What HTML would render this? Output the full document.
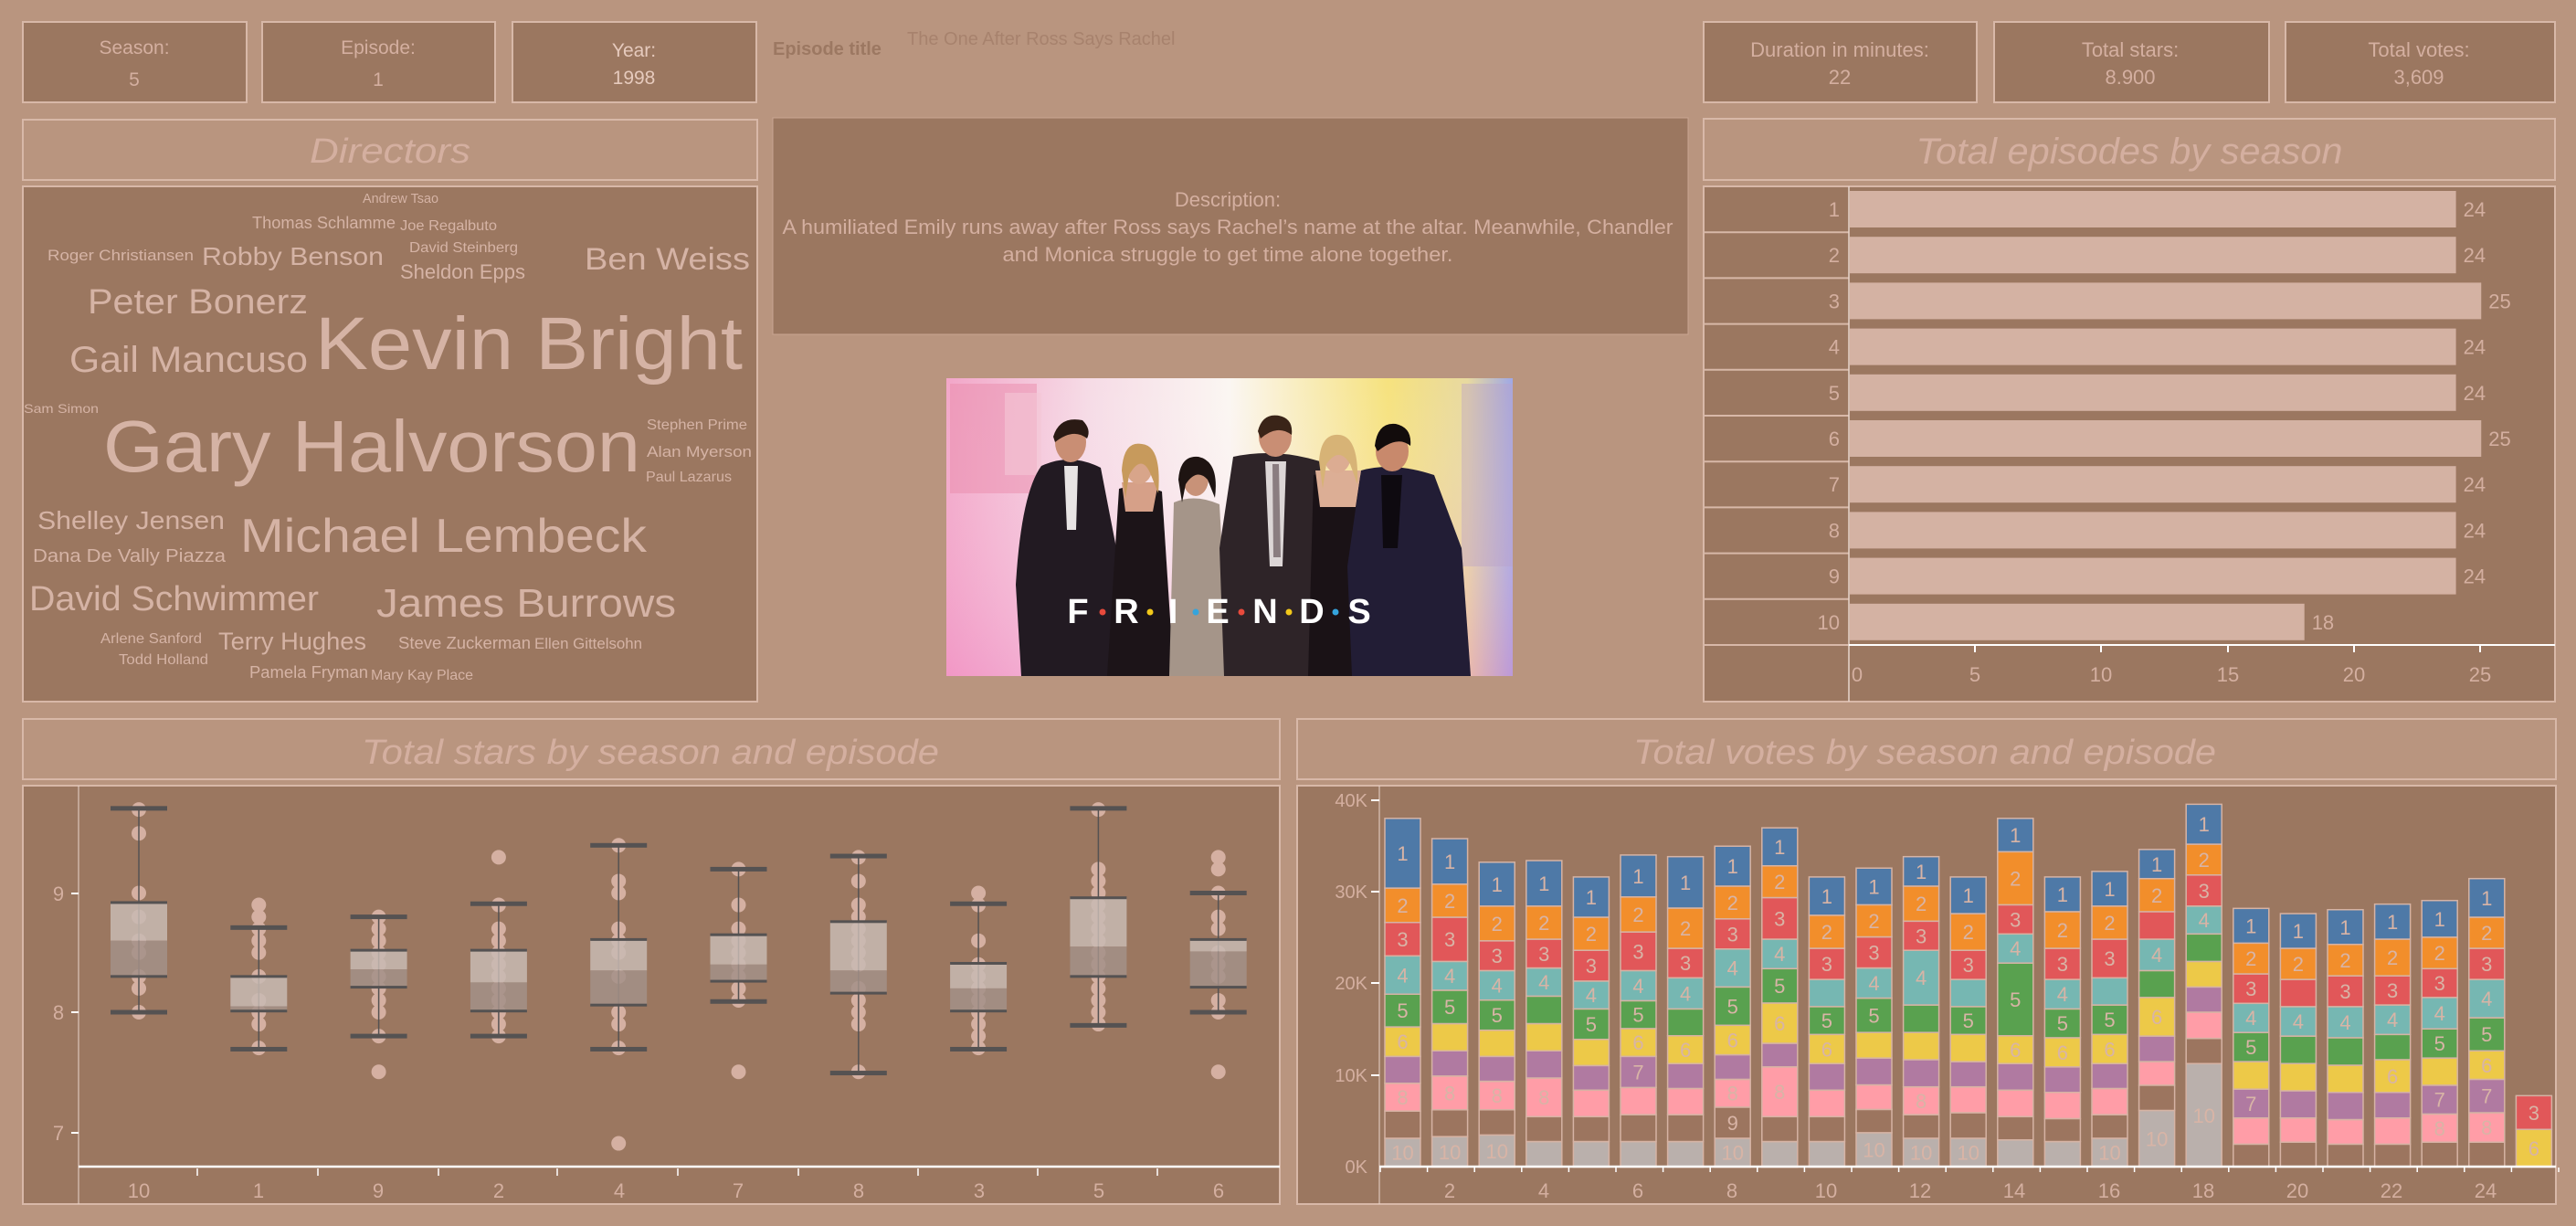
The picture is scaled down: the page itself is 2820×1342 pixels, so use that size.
<!DOCTYPE html>
<html><head><meta charset="utf-8">
<style>
html,body{margin:0;padding:0;background:#b9957f;}
svg{display:block;font-family:"Liberation Sans",sans-serif;}
</style></head>
<body>
<svg id="s" width="2820" height="1342" viewBox="0 0 2820 1342" xmlns="http://www.w3.org/2000/svg">
<defs>
<linearGradient id="bgG" x1="0" y1="0" x2="1" y2="0">
<stop offset="0" stop-color="#f2a6c8"/><stop offset="0.25" stop-color="#f6dbe6"/><stop offset="0.5" stop-color="#fbf6f2"/><stop offset="0.78" stop-color="#f6e27e"/><stop offset="0.92" stop-color="#e8d9a0"/><stop offset="1" stop-color="#9fa8e6"/>
</linearGradient>
<linearGradient id="bgV" x1="0" y1="0" x2="0" y2="1">
<stop offset="0" stop-color="#ffffff" stop-opacity="0"/><stop offset="1" stop-color="#f07cc0" stop-opacity="0.35"/>
</linearGradient>
<clipPath id="imgc"><rect x="1036" y="414" width="620" height="326"/></clipPath>
</defs>
<rect width="2820" height="1342" fill="#b9957f"/>

<g fill="#9b7760" stroke="#d8b8a8" stroke-width="2">
<rect x="25" y="24" width="245" height="88"/>
<rect x="287" y="24" width="255" height="88"/>
<rect x="561" y="24" width="267" height="88"/>
<rect x="1865" y="24" width="299" height="88"/>
<rect x="2183" y="24" width="301" height="88"/>
<rect x="2502" y="24" width="295" height="88"/>
</g>
<g font-size="21" text-anchor="middle" fill="#d4afa0">
<text x="147" y="59">Season:</text><text x="147" y="94">5</text>
<text x="414" y="59">Episode:</text><text x="414" y="94">1</text>
<text x="694" y="62" fill="#e6cabd">Year:</text><text x="694" y="92" fill="#e6cabd">1998</text>
<text x="2014" y="62" font-size="22">Duration in minutes:</text><text x="2014" y="92" font-size="22">22</text>
<text x="2332" y="62" font-size="22">Total stars:</text><text x="2332" y="92" font-size="22">8.900</text>
<text x="2648" y="62" font-size="22">Total votes:</text><text x="2648" y="92" font-size="22">3,609</text>
</g>
<text x="846" y="60" font-size="20" font-weight="bold" fill="#9c7862">Episode title</text>
<text x="993" y="49" font-size="20" fill="#a7826d">The One After Ross Says Rachel</text>

<rect x="25" y="131" width="804" height="66" fill="#b9957f" stroke="#d8b8a8" stroke-width="2"/>
<text x="427" y="178" font-size="38" font-style="italic" text-anchor="middle" fill="#d4afa0" textLength="176" lengthAdjust="spacingAndGlyphs">Directors</text>
<rect x="25" y="204" width="804" height="564" fill="#9b7760" stroke="#d8b8a8" stroke-width="2"/>
<g fill="#d5b3a5">
<text x="397" y="222" font-size="15" textLength="83" lengthAdjust="spacingAndGlyphs">Andrew Tsao</text>
<text x="276" y="250" font-size="18" textLength="157" lengthAdjust="spacingAndGlyphs">Thomas Schlamme</text>
<text x="438" y="252" font-size="16" textLength="106" lengthAdjust="spacingAndGlyphs">Joe Regalbuto</text>
<text x="52" y="285" font-size="17" textLength="160" lengthAdjust="spacingAndGlyphs">Roger Christiansen</text>
<text x="221" y="290" font-size="28" textLength="199" lengthAdjust="spacingAndGlyphs">Robby Benson</text>
<text x="448" y="276" font-size="16" textLength="119" lengthAdjust="spacingAndGlyphs">David Steinberg</text>
<text x="438" y="305" font-size="22" textLength="137" lengthAdjust="spacingAndGlyphs">Sheldon Epps</text>
<text x="640" y="295" font-size="34" textLength="181" lengthAdjust="spacingAndGlyphs">Ben Weiss</text>
<text x="96" y="343" font-size="38" textLength="241" lengthAdjust="spacingAndGlyphs">Peter Bonerz</text>
<text x="345" y="404" font-size="82" textLength="468" lengthAdjust="spacingAndGlyphs">Kevin Bright</text>
<text x="76" y="407" font-size="40" textLength="261" lengthAdjust="spacingAndGlyphs">Gail Mancuso</text>
<text x="26" y="452" font-size="14" textLength="82" lengthAdjust="spacingAndGlyphs">Sam Simon</text>
<text x="113" y="516" font-size="80" textLength="588" lengthAdjust="spacingAndGlyphs">Gary Halvorson</text>
<text x="708" y="470" font-size="16" textLength="110" lengthAdjust="spacingAndGlyphs">Stephen Prime</text>
<text x="708" y="500" font-size="17" textLength="115" lengthAdjust="spacingAndGlyphs">Alan Myerson</text>
<text x="707" y="527" font-size="16" textLength="94" lengthAdjust="spacingAndGlyphs">Paul Lazarus</text>
<text x="41" y="579" font-size="28" textLength="205" lengthAdjust="spacingAndGlyphs">Shelley Jensen</text>
<text x="263" y="604" font-size="52" textLength="445" lengthAdjust="spacingAndGlyphs">Michael Lembeck</text>
<text x="36" y="615" font-size="20" textLength="211" lengthAdjust="spacingAndGlyphs">Dana De Vally Piazza</text>
<text x="32" y="668" font-size="38" textLength="317" lengthAdjust="spacingAndGlyphs">David Schwimmer</text>
<text x="412" y="675" font-size="44" textLength="328" lengthAdjust="spacingAndGlyphs">James Burrows</text>
<text x="110" y="704" font-size="16" textLength="111" lengthAdjust="spacingAndGlyphs">Arlene Sanford</text>
<text x="239" y="711" font-size="27" textLength="162" lengthAdjust="spacingAndGlyphs">Terry Hughes</text>
<text x="436" y="710" font-size="18" textLength="145" lengthAdjust="spacingAndGlyphs">Steve Zuckerman</text>
<text x="585" y="710" font-size="17" textLength="118" lengthAdjust="spacingAndGlyphs">Ellen Gittelsohn</text>
<text x="130" y="727" font-size="16" textLength="98" lengthAdjust="spacingAndGlyphs">Todd Holland</text>
<text x="273" y="742" font-size="18" textLength="130" lengthAdjust="spacingAndGlyphs">Pamela Fryman</text>
<text x="406" y="744" font-size="16" textLength="112" lengthAdjust="spacingAndGlyphs">Mary Kay Place</text>
</g>

<rect x="846" y="129" width="1002" height="237" fill="#9b7760" stroke="#c9a592" stroke-width="1"/>
<g font-size="22" fill="#d4afa0" text-anchor="middle">
<text x="1344" y="226">Description:</text>
<text x="1344" y="256" textLength="975" lengthAdjust="spacingAndGlyphs">A humiliated Emily runs away after Ross says Rachel’s name at the altar. Meanwhile, Chandler</text>
<text x="1344" y="286" textLength="493" lengthAdjust="spacingAndGlyphs">and Monica struggle to get time alone together.</text>
</g>

<g clip-path="url(#imgc)">
<rect x="1036" y="414" width="620" height="326" fill="url(#bgG)"/>
<rect x="1036" y="414" width="620" height="326" fill="url(#bgV)"/>
<rect x="1040" y="420" width="95" height="120" fill="#e98cab" opacity="0.5"/>
<rect x="1100" y="430" width="40" height="90" fill="#f3c7d6" opacity="0.6"/>
<rect x="1600" y="420" width="56" height="200" fill="#b9a0c8" opacity="0.4"/>
<path d="M1140 510 Q1172 495 1205 512 L1222 600 L1215 740 L1118 740 L1112 640 Q1118 540 1140 510Z" fill="#221a22"/>
<path d="M1165 510 L1180 510 L1178 580 L1168 580Z" fill="#e8e4e4"/>
<ellipse cx="1172" cy="484" rx="17" ry="22" fill="#c98e74"/>
<path d="M1153 478 Q1160 455 1185 460 Q1195 470 1190 480 Q1175 468 1155 484Z" fill="#2a1a14"/>
<path d="M1225 535 Q1247 528 1272 538 L1285 740 L1212 740Z" fill="#1c1418"/>
<path d="M1228 528 L1268 528 L1262 560 L1232 560Z" fill="#d6a088"/>
<ellipse cx="1247" cy="510" rx="15" ry="20" fill="#d8a58a"/>
<path d="M1228 515 Q1230 482 1250 486 Q1272 488 1268 540 L1260 520 Q1250 495 1236 520 L1232 545Z" fill="#c79a5c"/>
<path d="M1285 550 Q1308 540 1335 552 L1345 740 L1280 740Z" fill="#a59589"/>
<ellipse cx="1309" cy="524" rx="14" ry="19" fill="#c89278"/>
<path d="M1290 525 Q1292 498 1312 500 Q1335 505 1330 545 L1322 525 Q1310 512 1298 530 L1294 550Z" fill="#1e1412"/>
<path d="M1350 500 Q1396 490 1445 505 L1462 600 L1455 740 L1340 740 L1335 600Z" fill="#2e2428"/>
<path d="M1385 505 L1408 505 L1404 620 L1390 620Z" fill="#dcd6d6"/>
<path d="M1393 508 L1400 508 L1402 610 L1394 610Z" fill="#8a7d80"/>
<ellipse cx="1396" cy="478" rx="18" ry="22" fill="#c98e74"/>
<path d="M1377 472 Q1382 452 1400 455 Q1416 458 1414 476 Q1398 464 1380 480Z" fill="#3a2418"/>
<path d="M1438 520 Q1464 512 1495 522 L1500 740 L1432 740Z" fill="#1a1216"/>
<path d="M1440 515 L1490 515 L1484 555 L1445 555Z" fill="#dcae95"/>
<ellipse cx="1464" cy="498" rx="15" ry="20" fill="#dcac92"/>
<path d="M1444 505 Q1446 474 1466 476 Q1488 478 1486 530 L1478 508 Q1466 488 1452 508 L1448 535Z" fill="#d7b376"/>
<path d="M1490 515 Q1525 505 1570 520 L1600 600 L1610 740 L1480 740 L1475 620Z" fill="#221d35"/>
<path d="M1512 520 L1535 520 L1530 600 L1514 600Z" fill="#0e0a10"/>
<ellipse cx="1524" cy="494" rx="18" ry="22" fill="#c8896c"/>
<path d="M1505 488 Q1508 462 1528 464 Q1546 468 1544 488 Q1530 476 1508 494Z" fill="#120c0c"/>
<g font-weight="bold" font-size="38" fill="#ffffff" text-anchor="middle">
<text x="1180" y="682">F</text><text x="1233" y="682">R</text><text x="1284" y="682">I</text><text x="1333" y="682">E</text><text x="1385" y="682">N</text><text x="1436" y="682">D</text><text x="1488" y="682">S</text>
</g>
<circle cx="1207" cy="670" r="3.5" fill="#e84a3c"/><circle cx="1259" cy="670" r="3.5" fill="#f2c81a"/><circle cx="1309" cy="670" r="3.5" fill="#35a4dc"/><circle cx="1359" cy="670" r="3.5" fill="#e84a3c"/><circle cx="1411" cy="670" r="3.5" fill="#f2c81a"/><circle cx="1462" cy="670" r="3.5" fill="#35a4dc"/>
</g>

<rect x="1865" y="130" width="932" height="67" fill="#b9957f" stroke="#d8b8a8" stroke-width="2"/>
<text x="2331" y="179" font-size="40" font-style="italic" text-anchor="middle" fill="#d4afa0" textLength="467" lengthAdjust="spacingAndGlyphs">Total episodes by season</text>
<rect x="1865" y="204" width="932" height="564" fill="#9b7760" stroke="#d8b8a8" stroke-width="2"/>
<g id="epi"></g>
<line x1="2024" y1="204" x2="2024" y2="768" stroke="#e8d6cc" stroke-width="1.5"/>
<line x1="2024" y1="706" x2="2797" y2="706" stroke="#ffffff" stroke-width="2"/>
<g font-size="22" fill="#d4afa0" text-anchor="middle">
<text x="2033" y="746">0</text><text x="2162" y="746">5</text><text x="2300" y="746">10</text><text x="2439" y="746">15</text><text x="2577" y="746">20</text><text x="2715" y="746">25</text>
</g>
<g stroke="#ffffff" stroke-width="2"><line x1="2162" y1="707" x2="2162" y2="714"/><line x1="2300" y1="707" x2="2300" y2="714"/><line x1="2439" y1="707" x2="2439" y2="714"/><line x1="2577" y1="707" x2="2577" y2="714"/><line x1="2715" y1="707" x2="2715" y2="714"/></g>

<rect x="25" y="787" width="1376" height="66" fill="#b9957f" stroke="#d8b8a8" stroke-width="2"/>
<text x="712" y="836" font-size="38" font-style="italic" text-anchor="middle" fill="#d4afa0" textLength="632" lengthAdjust="spacingAndGlyphs">Total stars by season and episode</text>
<rect x="25" y="860" width="1376" height="458" fill="#9b7760" stroke="#d8b8a8" stroke-width="2"/>
<line x1="86" y1="860" x2="86" y2="1318" stroke="#e8d6cc" stroke-width="1"/>
<g font-size="22" fill="#d4afa0" text-anchor="middle"><text x="64" y="986">9</text><text x="64" y="1116">8</text><text x="64" y="1248">7</text></g>
<g stroke="#fff" stroke-width="2"><line x1="78" y1="978" x2="86" y2="978"/><line x1="78" y1="1108" x2="86" y2="1108"/><line x1="78" y1="1240" x2="86" y2="1240"/></g>
<g id="box"></g>
<line x1="86" y1="1277" x2="1401" y2="1277" stroke="#ffffff" stroke-width="2.5"/>
<g stroke="#fff" stroke-width="1.5"><line x1="216" y1="1279" x2="216" y2="1287"/><line x1="348" y1="1279" x2="348" y2="1287"/><line x1="480" y1="1279" x2="480" y2="1287"/><line x1="610" y1="1279" x2="610" y2="1287"/><line x1="742" y1="1279" x2="742" y2="1287"/><line x1="874" y1="1279" x2="874" y2="1287"/><line x1="1005" y1="1279" x2="1005" y2="1287"/><line x1="1136" y1="1279" x2="1136" y2="1287"/><line x1="1267" y1="1279" x2="1267" y2="1287"/></g>
<g font-size="22" fill="#d4afa0" text-anchor="middle">
<text x="152" y="1311">10</text><text x="283" y="1311">1</text><text x="414" y="1311">9</text><text x="546" y="1311">2</text><text x="678" y="1311">4</text><text x="808" y="1311">7</text><text x="940" y="1311">8</text><text x="1072" y="1311">3</text><text x="1203" y="1311">5</text><text x="1334" y="1311">6</text>
</g>

<rect x="1420" y="787" width="1378" height="66" fill="#b9957f" stroke="#d8b8a8" stroke-width="2"/>
<text x="2107" y="836" font-size="38" font-style="italic" text-anchor="middle" fill="#d4afa0" textLength="638" lengthAdjust="spacingAndGlyphs">Total votes by season and episode</text>
<rect x="1420" y="860" width="1378" height="458" fill="#9b7760" stroke="#d8b8a8" stroke-width="2"/>
<line x1="1510" y1="860" x2="1510" y2="1318" stroke="#e8d6cc" stroke-width="1"/>
<g font-size="20" fill="#d4afa0" text-anchor="end">
<text x="1497" y="883">40K</text><text x="1497" y="983">30K</text><text x="1497" y="1083">20K</text><text x="1497" y="1184">10K</text><text x="1497" y="1284">0K</text>
</g>
<g stroke="#fff" stroke-width="2"><line x1="1501" y1="876" x2="1510" y2="876"/><line x1="1501" y1="976" x2="1510" y2="976"/><line x1="1501" y1="1076" x2="1510" y2="1076"/><line x1="1501" y1="1177" x2="1510" y2="1177"/></g>
<g id="votes"></g>
<line x1="1510" y1="1277" x2="2798" y2="1277" stroke="#ffffff" stroke-width="2.5"/>
<g font-size="22" fill="#d4afa0" text-anchor="middle">
<text x="1587" y="1311">2</text><text x="1690" y="1311">4</text><text x="1793" y="1311">6</text><text x="1896" y="1311">8</text><text x="1999" y="1311">10</text><text x="2102" y="1311">12</text><text x="2205" y="1311">14</text><text x="2309" y="1311">16</text><text x="2412" y="1311">18</text><text x="2515" y="1311">20</text><text x="2618" y="1311">22</text><text x="2721" y="1311">24</text>
</g>
</svg>
<script>
(function(){
var NS="http://www.w3.org/2000/svg";
function el(p,t,a,txt){var e=document.createElementNS(NS,t);for(var k in a)e.setAttribute(k,a[k]);if(txt!==undefined)e.textContent=txt;p.appendChild(e);return e;}
var g=document.getElementById('epi');var vals=[24,24,25,24,24,25,24,24,24,18];
for(var i=0;i<10;i++){var ry=204+i*50.2;
 if(i>0)el(g,'line',{x1:1865,y1:ry,x2:2024,y2:ry,stroke:'#d8b8a8','stroke-width':2});
 el(g,'rect',{x:2025,y:ry+5,width:vals[i]*27.65,height:40,fill:'#d4b2a3'});
 el(g,'text',{x:2014,y:ry+33,'font-size':22,fill:'#d4afa0','text-anchor':'end'},String(i+1));
 el(g,'text',{x:2025+vals[i]*27.65+8,y:ry+33,'font-size':22,fill:'#d4afa0'},String(vals[i]));}
el(g,'line',{x1:1865,y1:706,x2:2024,y2:706,stroke:'#d8b8a8','stroke-width':2});
var b=document.getElementById('box');
function Y(v){return 1108-(v-8)*130.5;}
var cats=[[9.71,8.92,8.6,8.3,8.0,[9.7,9.5,9.0,8.8,8.6,8.5,8.3,8.2,8.0]],
[8.71,8.3,8.05,8.01,7.69,[8.9,8.8,8.7,8.6,8.5,8.3,8.1,8.0,7.9,7.7]],
[8.8,8.52,8.36,8.21,7.8,[8.8,8.7,8.6,8.5,8.4,8.3,8.2,8.1,8.0,7.8,7.5]],
[8.91,8.52,8.25,8.01,7.8,[9.3,8.9,8.7,8.6,8.5,8.4,8.3,8.2,8.1,8.0,7.9,7.8]],
[9.4,8.61,8.35,8.06,7.69,[9.4,9.1,9.0,8.7,8.6,8.5,8.3,8.0,7.9,7.7,6.9]],
[9.2,8.65,8.4,8.26,8.09,[9.2,8.9,8.7,8.6,8.5,8.4,8.3,8.2,8.1,7.5]],
[9.31,8.76,8.35,8.16,7.49,[9.3,9.1,8.9,8.8,8.7,8.6,8.5,8.4,8.2,8.1,8.0,7.9,7.5]],
[8.91,8.41,8.2,8.01,7.69,[9.0,8.9,8.6,8.4,8.3,8.2,8.1,8.0,7.9,7.8,7.7]],
[9.71,8.96,8.55,8.3,7.89,[9.7,9.2,9.1,9.0,8.9,8.8,8.7,8.6,8.5,8.4,8.3,8.2,8.1,8.0,7.9]],
[9.0,8.61,8.51,8.21,8.0,[9.3,9.2,9.0,8.8,8.7,8.5,8.4,8.3,8.1,8.0,7.5]]];
for(var i=0;i<10;i++){var c=cats[i],cx=152+i*131.3;
 c[5].forEach(function(v){el(b,'circle',{cx:cx,cy:Y(v),r:8,fill:'#d5b0a2'});});
 el(b,'line',{x1:cx,y1:Y(c[0]),x2:cx,y2:Y(c[4]),stroke:'#555252','stroke-width':1.5});
 el(b,'rect',{x:cx-31,y:Y(c[1]),width:62,height:Y(c[2])-Y(c[1]),fill:'#c8bab3','fill-opacity':0.85});
 el(b,'rect',{x:cx-31,y:Y(c[2]),width:62,height:Y(c[3])-Y(c[2]),fill:'#a39188','fill-opacity':0.85});
 [c[0],c[4]].forEach(function(v){el(b,'rect',{x:cx-31,y:Y(v)-2.5,width:62,height:5,fill:'#555252'});});
 [c[1],c[3]].forEach(function(v){el(b,'rect',{x:cx-31,y:Y(v)-1.5,width:62,height:3,fill:'#555252'});});}
var vg=document.getElementById('votes');
var col={1:'#4e79a7',2:'#f28e2b',3:'#e15759',4:'#76b7b2',5:'#59a14f',6:'#edc948',7:'#b07aa1',8:'#ff9da7',9:'#9c755f',10:'#bab0ac'};
var B=[[1300,1217,1132,1050,960,860,743,641,536,323],[1295,1213,1110,1033,950,848,760,625,524,385],[1290,1213,1126,1050,970,878,788,697,591,457],[1310,1234,1116,1033,950,866,780,692,591,452],[1310,1234,1153,1078,998,905,820,726,625,502],[1310,1228,1145,1050,965,880,788,670,563,435],[1310,1228,1148,1072,987,905,810,720,597,440],[1300,1205,1120,1045,955,838,722,630,530,408],[1310,1234,1082,1010,887,782,692,565,468,352],[1310,1234,1153,1072,983,898,815,720,619,502],[1283,1212,1137,1055,977,872,780,685,587,475],[1300,1228,1143,1060,977,893,726,637,530,440],[1300,1222,1143,1066,983,898,815,726,614,502],[1305,1234,1153,1072,987,765,676,587,425,323],[1310,1240,1160,1082,993,905,815,720,608,502],[1300,1228,1148,1072,983,893,810,692,591,485],[1215,1138,1066,988,870,788,692,608,507,418],[1072,995,915,838,760,676,591,496,402,280],[1388,1318,1238,1150,1066,977,888,798,704,598],[1388,1312,1238,1155,1072,988,898,815,720,614],[1388,1318,1243,1160,1077,993,898,804,708,602],[1388,1318,1238,1160,1060,983,893,804,692,585],[1388,1312,1226,1138,1055,966,870,782,686,574],[1388,1312,1222,1120,1033,932,815,720,625,507],[1388,1388,1388,1388,1273,1273,1273,1170,1170,1170]];
function Z(z){return 780+z/2.79;}
for(var i=0;i<25;i++){var x=1516+i*51.6,prev=1388;
 for(var j=0;j<10;j++){var s=10-j,t=B[i][j];
  if(prev-t>0.5){var y1=Z(t),y2=Z(prev);
   el(vg,'rect',{x:x,y:y1,width:39,height:y2-y1,fill:col[s],stroke:'#d6b3a4','stroke-width':1.5});
   if(prev-t>=85)el(vg,'text',{x:x+19.5,y:(y1+y2)/2+8,'font-size':22,fill:'#d8b4a6','text-anchor':'middle'},String(s));}
  prev=t;}}
for(var i=0;i<=25;i++){el(vg,'line',{x1:1511+i*51.6,y1:1278,x2:1511+i*51.6,y2:1283,stroke:'#fff','stroke-width':1.5});}
})();
</script>
</body></html>
